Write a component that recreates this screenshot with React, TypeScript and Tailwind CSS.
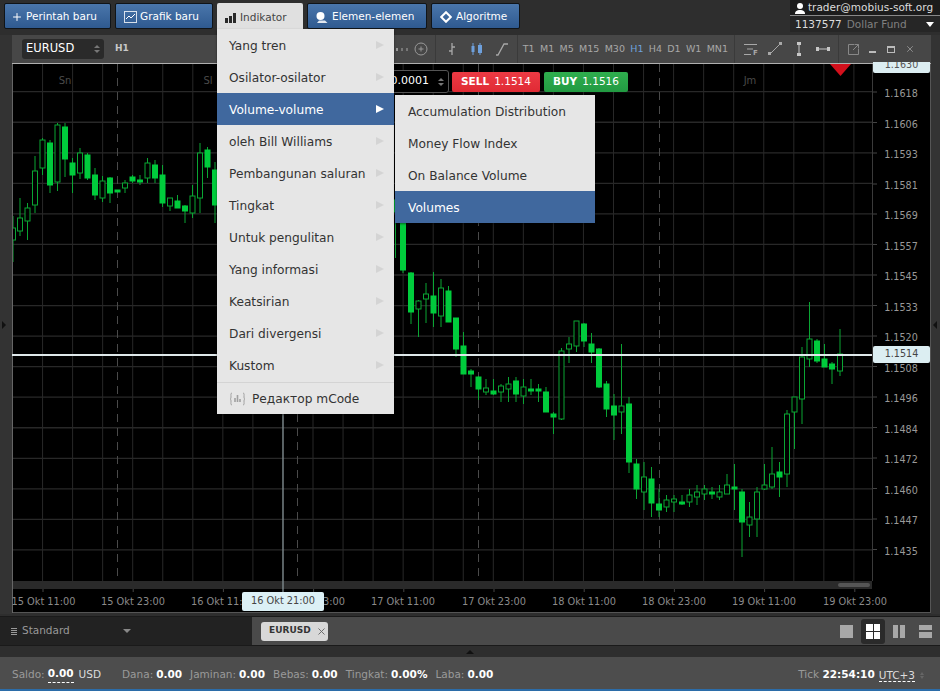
import React from 'react';
import { Plus, X } from 'lucide-react';

const FONT = "font-['DejaVu_Sans',sans-serif]";

// [x, wickTop, wickBottom, bodyTop, bodyBottom, filled]
type Candle = [number, number, number, number, number, number];

const candles: Candle[] = [
  [13, 216, 262, 228, 240, 0],
  [20, 198, 236, 218, 231, 0],
  [27.5, 203, 240, 208, 221, 0],
  [35, 156, 213, 171, 205, 0],
  [42.5, 138, 175, 140, 168, 0],
  [50, 140, 193, 143, 185, 1],
  [57.5, 123, 191, 125, 182, 0],
  [65, 123, 177, 127, 159, 1],
  [72.5, 158, 193, 163, 175, 1],
  [80, 148, 179, 153, 173, 0],
  [87.5, 153, 180, 155, 178, 1],
  [95, 168, 200, 175, 195, 1],
  [102.5, 176, 202, 181, 198, 0],
  [110, 177, 203, 178, 193, 1],
  [117.5, 190, 192, 190, 192, 1],
  [125, 180, 193, 183, 188, 0],
  [132.5, 175, 183, 177, 181, 1],
  [140, 175, 185, 180, 182, 1],
  [147.5, 158, 183, 163, 178, 0],
  [155, 160, 183, 165, 178, 1],
  [162.5, 165, 207, 175, 203, 1],
  [170, 198, 211, 198, 206, 0],
  [177.5, 195, 208, 201, 208, 1],
  [185, 205, 223, 206, 211, 1],
  [192.5, 185, 218, 196, 213, 0],
  [200, 143, 213, 153, 198, 0],
  [207.5, 147, 178, 150, 167, 1],
  [215, 162, 223, 170, 205, 1],
  [395.5, 200, 258, 200, 212, 1],
  [403, 220, 273, 220, 270, 1],
  [411, 272, 324, 273, 312, 1],
  [418.5, 300, 337, 301, 309, 0],
  [426, 283, 323, 294, 299, 0],
  [433.5, 272, 327, 296, 313, 1],
  [441, 279, 327, 288, 316, 0],
  [448.5, 286, 322, 291, 322, 1],
  [456, 318, 357, 318, 349, 1],
  [463.5, 332, 374, 346, 374, 1],
  [471, 369, 387, 371, 374, 1],
  [478.5, 376, 400, 377, 389, 1],
  [486, 379, 395, 388, 392, 0],
  [493.5, 379, 395, 391, 394, 1],
  [501, 384, 402, 386, 392, 0],
  [508.5, 377, 402, 384, 389, 0],
  [516, 377, 402, 381, 394, 1],
  [523.5, 379, 404, 387, 396, 0],
  [531, 379, 395, 389, 391, 1],
  [538.5, 384, 402, 389, 391, 1],
  [546, 387, 412, 392, 412, 1],
  [553.5, 412, 434, 414, 417, 1],
  [561.5, 348, 420, 351, 419, 0],
  [569, 337, 363, 344, 349, 0],
  [576.5, 321, 352, 321, 346, 0],
  [584, 323, 347, 324, 341, 1],
  [591.5, 333, 363, 344, 352, 1],
  [599, 348, 388, 349, 387, 1],
  [606.5, 381, 417, 384, 409, 1],
  [614, 394, 440, 406, 415, 1],
  [621.5, 344, 434, 406, 412, 0],
  [629, 397, 473, 404, 462, 1],
  [636.5, 459, 499, 464, 489, 1],
  [644, 462, 510, 477, 492, 0],
  [651.5, 467, 517, 479, 503, 1],
  [659, 489, 517, 504, 510, 1],
  [666.5, 495, 512, 500, 507, 0],
  [674, 495, 512, 499, 502, 0],
  [682, 495, 505, 502, 504, 1],
  [689.5, 489, 507, 495, 502, 0],
  [697, 485, 505, 492, 497, 0],
  [704.5, 485, 500, 489, 494, 0],
  [712, 487, 499, 492, 494, 1],
  [719.5, 485, 500, 492, 497, 0],
  [727, 474, 494, 485, 494, 0],
  [734.5, 464, 510, 487, 489, 1],
  [742, 489, 557, 492, 522, 1],
  [749.5, 502, 537, 517, 525, 0],
  [757, 487, 537, 492, 519, 0],
  [764.5, 464, 490, 485, 489, 0],
  [772, 447, 489, 474, 487, 0],
  [779.5, 462, 497, 472, 477, 1],
  [787, 410, 487, 414, 474, 0],
  [794.5, 397, 449, 397, 412, 0],
  [802, 347, 424, 357, 399, 0],
  [809.5, 302, 367, 339, 359, 0],
  [817, 339, 363, 341, 361, 1],
  [824.5, 344, 367, 359, 367, 1],
  [832, 362, 384, 364, 369, 1],
  [840, 329, 376, 354, 371, 0],
];

const prices: [string, number][] = [
  ['1.1618', 93], ['1.1606', 123.5], ['1.1593', 154], ['1.1581', 185],
  ['1.1569', 215], ['1.1557', 245.5], ['1.1545', 276], ['1.1533', 306.5],
  ['1.1520', 337], ['1.1508', 367.5], ['1.1496', 398], ['1.1484', 428.5],
  ['1.1472', 459], ['1.1460', 489.5], ['1.1447', 520], ['1.1435', 550.5],
];

const times: [string, number][] = [
  ['15 Okt 11:00', 43.5], ['15 Okt 23:00', 133], ['16 Okt 11:00', 223], ['16 Okt 23:00', 313],
  ['17 Okt 11:00', 403], ['17 Okt 23:00', 494], ['18 Okt 11:00', 584], ['18 Okt 23:00', 674],
  ['19 Okt 11:00', 764], ['19 Okt 23:00', 855],
];

const menuItems = [
  'Yang tren', 'Osilator-osilator', 'Volume-volume', 'oleh Bill Williams', 'Pembangunan saluran',
  'Tingkat', 'Untuk pengulitan', 'Yang informasi', 'Keatsirian', 'Dari divergensi', 'Kustom',
];

const subItems = ['Accumulation Distribution', 'Money Flow Index', 'On Balance Volume', 'Volumes'];

const periods = ['T1', 'M1', 'M5', 'M15', 'M30', 'H1', 'H4', 'D1', 'W1', 'MN1'];

const ChartCanvas = () => (
  <svg viewBox="12 64 919 549" width={919} height={549} className="block bg-black">
    {Array.from({ length: 29 }, (_, k) => (
      <line key={k} x1={12.5 + k * 30.05} x2={12.5 + k * 30.05} y1={64} y2={581} stroke="#282828" />
    ))}
    {Array.from({ length: 16 }, (_, k) => (
      <line key={k} x1={12} x2={872} y1={91.7 + k * 30.55} y2={91.7 + k * 30.55} stroke="#282828" strokeWidth={1.3} />
    ))}
    {[117.5, 297.5, 478.5, 659.5].map((x) => (
      <line key={x} x1={x} x2={x} y1={64} y2={581} stroke="#4a4a4a" strokeDasharray="8 6" />
    ))}
    {candles.map(([x, wt, wb, bt, bb, filled], i) => (
      <g key={i}>
        <line x1={x} x2={x} y1={wt} y2={wb} stroke="#0aa533" />
        <rect
          x={x - 2.5}
          y={bt}
          width={5}
          height={Math.max(bb - bt, 2)}
          fill={filled ? '#00cc3c' : '#000'}
          stroke={filled ? '#00cc3c' : '#0aa533'}
        />
      </g>
    ))}
    <text x={65} y={84} fontSize={10} fill="#4a4a4a" textAnchor="middle">Sn</text>
    <text x={208} y={84} fontSize={10} fill="#4a4a4a" textAnchor="middle">Sl</text>
    <text x={750} y={84} fontSize={10} fill="#4a4a4a" textAnchor="middle">Jm</text>

    <rect x={12} y={581} width={860} height={8} fill="#2a2a2a" />
    <rect x={838} y={583} width={32} height={4} rx={2} fill="#555" />
    <rect x={12} y={612} width={919} height={1} fill="#555" />
    <rect x={12} y={64} width={1} height={549} fill="#666" />
    <rect x={872} y={64} width={1} height={517} fill="#3a3a3a" />
    <rect x={930} y={64} width={1} height={549} fill="#555" />

    {Array.from({ length: 10 }, (_, k) => (
      <line key={k} x1={43 + k * 90.2} x2={43 + k * 90.2} y1={589} y2={592} stroke="#444" />
    ))}
    {prices.map(([p, y]) => (
      <g key={p}>
        <line x1={873} x2={877} y1={y - 1} y2={y - 1} stroke="#444" />
        <text x={901} y={y + 4} fontSize={9.6} fill="#999" textAnchor="middle" className={FONT}>{p}</text>
      </g>
    ))}
    {times.map(([t, x]) => (
      <text key={t} x={x} y={604.5} fontSize={9.8} fill="#8a8a8a" textAnchor="middle" className={FONT}>{t}</text>
    ))}

    <line x1={283} x2={283} y1={64} y2={594} stroke="#9fb0b5" />
    <rect x={12} y={354} width={860} height={2} fill="#dfe8ea" />
    <polygon points="830,64 851,64 840.5,76" fill="#d3101c" />
  </svg>
);

const TopButton = ({ icon, label, className }: { icon: React.ReactNode; label: string; className: string }) => (
  <button className={`flex items-center h-[26px] pl-[8px] pt-[2px] rounded-[2px] border border-[#101418] bg-gradient-to-b from-[#4a76ab] to-[#2f5a90] text-white text-[10.5px] ${className}`}>
    {icon}
    <span>{label}</span>
  </button>
);

const IconGrafik = () => (
  <svg width="13" height="12" viewBox="0 0 13 12" fill="none" stroke="#fff">
    <rect x="0.5" y="0.5" width="12" height="11" strokeOpacity="0.8" />
    <path d="M2 8l3-3 2 2 4-4" />
  </svg>
);

const IconBars = () => (
  <svg width="11" height="10" viewBox="0 0 11 10" fill="#2a2a2a">
    <rect x="0" y="5" width="3" height="5" />
    <rect x="4" y="3" width="3" height="7" />
    <rect x="8" y="0" width="3" height="10" />
  </svg>
);

const IconElemen = () => (
  <svg width="12" height="11" viewBox="0 0 12 11" fill="#fff">
    <circle cx="4.5" cy="4" r="4" />
    <path d="M3 8.5h6l2.5 2.5H1z" fillOpacity="0.85" />
  </svg>
);

const IconDiamond = () => (
  <svg width="12" height="12" viewBox="0 0 12 12" fill="none" stroke="#fff" strokeWidth="2">
    <path d="M6 1.2L10.8 6 6 10.8 1.2 6z" />
  </svg>
);

const ToolIcon = ({ children, className }: { children: React.ReactNode; className?: string }) => (
  <svg width="14" height="16" viewBox="0 0 14 16" fill="none" stroke="#a8a8a8" className={className}>
    {children}
  </svg>
);

const Toolbar = () => (
  <div className="h-[29px] flex items-center bg-[#474747] border-b border-[#b0b0b0] text-[#a8a8a8] text-[9.5px]">
    <div className="ml-[10px] w-[82px] h-[20px] rounded-[3px] bg-[#2a2a2a] text-white text-[11.5px] flex items-center justify-between pl-[4px] pr-[4px]">
      <span>EURUSD</span>
      <span className="flex flex-col gap-[2px]">
        <span className="block w-0 h-0 border-x-[3px] border-x-transparent border-b-[3px] border-b-[#777]" />
        <span className="block w-0 h-0 border-x-[3px] border-x-transparent border-t-[3px] border-t-[#777]" />
      </span>
    </div>
    <span className="ml-[11px] font-bold text-[9px] text-[#c8c8c8]">H1</span>
    <div className="ml-[267px] flex items-center gap-[3px]">
      <span className="w-[2px] h-[3px] bg-[#999]" />
      <span className="w-[2px] h-[3px] bg-[#777]" />
      <span className="w-[2px] h-[3px] bg-[#777]" />
    </div>
    <svg className="ml-[6px]" width="14" height="14" viewBox="0 0 14 14" fill="none" stroke="#999">
      <circle cx="7" cy="7" r="6" />
      <path d="M7 4.5v5M4.5 7h5" />
    </svg>
    <div className="ml-[7px] h-full w-px bg-[#3a3a3a]" />
    <div className="ml-[9px] flex items-center gap-[11px]">
      <ToolIcon><path d="M7 2v12M4 10h3M7 6h3" strokeWidth="1.3" /></ToolIcon>
      <svg width="14" height="16" viewBox="0 0 14 16">
        <path d="M3 2v12" stroke="#6ea0dc" />
        <rect x="1.5" y="5" width="3" height="6" fill="#6ea0dc" />
        <path d="M10 2v12" stroke="#6ea0dc" />
        <rect x="8" y="4" width="4" height="8" fill="#6ea0dc" />
      </svg>
      <ToolIcon><path d="M1 14h2L9 3h4" strokeWidth="1.3" /></ToolIcon>
    </div>
    <div className="ml-[8px] h-full w-px bg-[#3a3a3a]" />
    <div className="ml-[5px] flex items-center gap-[5.3px]">
      {periods.map((p) => (
        <span key={p} className={p === 'H1' ? 'text-[#6ea0dc]' : ''}>{p}</span>
      ))}
    </div>
    <div className="ml-[6px] h-full w-px bg-[#3a3a3a]" />
    <svg className="ml-[9px]" width="14" height="14" viewBox="0 0 14 14" fill="none" stroke="#a8a8a8">
      <path d="M0 2.5h13M3 7h6M0 12.5h7" />
      <text x="9" y="13" fontSize="7" fontWeight="bold" fill="#a8a8a8" stroke="none">F</text>
    </svg>
    <ToolIcon className="ml-[10px]"><path d="M2 13L12 3" /><rect x="0.5" y="11.5" width="2" height="2" fill="#a8a8a8" /><rect x="11.5" y="1.5" width="2" height="2" fill="#a8a8a8" /></ToolIcon>
    <ToolIcon className="ml-[10px]"><path d="M7 2v12" stroke="#c8c8c8" /><rect x="5.5" y="1.5" width="3" height="2" fill="#c8c8c8" stroke="#c8c8c8" /><rect x="5.5" y="12.5" width="3" height="2" fill="#c8c8c8" stroke="#c8c8c8" /></ToolIcon>
    <ToolIcon className="ml-[10px]"><path d="M1 8h12" stroke="#c8c8c8" /><rect x="0.5" y="6.5" width="2" height="3" fill="#c8c8c8" stroke="#c8c8c8" /><rect x="11.5" y="6.5" width="2" height="3" fill="#c8c8c8" stroke="#c8c8c8" /></ToolIcon>
    <div className="ml-[8px] h-full w-px bg-[#3a3a3a]" />
    <svg className="ml-[9px]" width="11" height="11" viewBox="0 0 11 11" fill="none" stroke="#888">
      <path d="M6 .5H.5v10h10V5M6.5.5h4v4M10.5.5L5 6" />
    </svg>
    <span className="ml-[10px] w-[7px] h-[2px] mt-[6px] bg-[#bbb]" />
    <span className="ml-[11px] w-[8px] h-[7px] border border-[#bbb] border-t-2" />
    <X size={10} className="ml-[10px] text-[#999]" />
  </div>
);

const Menu = () => (
  <div className="absolute left-[217px] top-[29px] w-[177px] bg-[#e6e6e6] text-[#333] text-[12.2px] shadow-[0_1px_2px_rgba(0,0,0,0.5)]">
    {menuItems.map((item) => (
      <div
        key={item}
        className={`h-[32px] pl-[12px] pr-[10px] pt-[3px] flex items-center justify-between ${item === 'Volume-volume' ? 'bg-[#40689e] text-white' : ''}`}
      >
        <span>{item}</span>
        <span
          className={`block w-0 h-0 mb-[3px] border-y-[4px] border-y-transparent border-l-[8px] ${item === 'Volume-volume' ? 'border-l-white' : 'border-l-[#d4d4d4]'}`}
        />
      </div>
    ))}
    <div className="h-[32px] mt-px border-t border-[#d4d4d4] pl-[12px] pt-[1px] flex items-center gap-[6px]">
      <svg width="17" height="14" viewBox="0 0 17 14" fill="none" stroke="#a0a0a0">
        <path d="M3 1C1.5 1 2 3 2 5S1 7 1 7s1 0 1 2-.5 4 1 4M14 1c1.5 0 1 2 1 4s1 2 1 2-1 0-1 2 .5 4-1 4" />
        <path d="M6 6v4M8.5 3v7M11 7v3" strokeWidth="1.6" />
      </svg>
      <span>Редактор mCode</span>
    </div>
    <div className="absolute left-[178px] top-[66px] w-[200px] bg-[#e6e6e6] shadow-[0_1px_2px_rgba(0,0,0,0.5)]">
      {subItems.map((item) => (
        <div
          key={item}
          className={`h-[32px] pl-[13px] pt-[3px] flex items-center ${item === 'Volumes' ? 'bg-[#40689e] text-white' : ''}`}
        >
          {item}
        </div>
      ))}
    </div>
  </div>
);

const StatusItem = ({ label, value }: { label: string; value: string }) => (
  <span className="flex gap-[3px] text-[#9a9a9a]">
    <span>{label}:</span>
    <b className="text-white">{value}</b>
  </span>
);

export default function App() {
  return (
    <div className={`relative w-[940px] h-[691px] overflow-hidden flex flex-col bg-[#2e2e2e] ${FONT}`}>
      {/* top bar */}
      <div className="h-[32px] flex items-start">
        <div className="flex gap-[4px] pt-[3px] pl-[4px]">
          <TopButton className="w-[107px] gap-[3px] !pl-[6px]" icon={<Plus size={12} strokeWidth={2} />} label="Perintah baru" />
          <TopButton className="w-[98px] gap-[3px]" icon={<IconGrafik />} label="Grafik baru" />
          <div className="w-[86px] h-[27px] pt-[2px] rounded-t-[2px] bg-[#e0e0e0] text-[#444] text-[10.5px] flex items-center gap-[4px] pl-[8px]">
            <IconBars />
            <span>Indikator</span>
          </div>
          <TopButton className="w-[120px] gap-[4px]" icon={<IconElemen />} label="Elemen-elemen" />
          <TopButton className="w-[89px] gap-[4px]" icon={<IconDiamond />} label="Algoritme" />
        </div>
        <div className="ml-auto w-[150px] h-[32px] text-[10.5px]">
          <div className="h-[16px] pt-[1px] bg-[#1c1c1c] border-b border-[#888] flex items-center gap-[3px] pl-[5px] text-[#ddd]">
            <svg width="10" height="11" viewBox="0 0 10 11" fill="#fff">
              <circle cx="5" cy="3" r="3" />
              <path d="M0 11c0-3 2-4 5-4s5 1 5 4z" />
            </svg>
            <span>trader@mobius-soft.org</span>
          </div>
          <div className="h-[16px] pt-[1px] bg-[#262626] flex items-center pl-[5px] pr-[6px]">
            <span className="text-[#ddd]">1137577</span>
            <span className="ml-[5px] text-[#808080]">Dollar Fund</span>
            <span className="ml-auto block w-0 h-0 border-x-[4px] border-x-transparent border-t-[5px] border-t-white" />
          </div>
        </div>
      </div>

      {/* workspace */}
      <div className="flex-1 flex pt-[3px]">
        <div className="w-[12px] bg-[#333] flex items-center">
          <span className="block w-0 h-0 border-y-[4px] border-y-transparent border-l-[4px] border-l-[#111] ml-[2px]" />
        </div>
        <div className="w-[919px] flex flex-col">
          <Toolbar />
          <div className="relative">
            <ChartCanvas />
            <div className="absolute left-[370px] top-[6px] w-[67px] h-[23px] rounded-[3px] border border-[#555] bg-black text-white text-[11px] flex items-center justify-end pr-[4px] gap-[9px]">
              <span>0.0001</span>
              <span className="flex flex-col gap-[2px]">
                <span className="block w-0 h-0 border-x-[3px] border-x-transparent border-b-[3px] border-b-[#777]" />
                <span className="block w-0 h-0 border-x-[3px] border-x-transparent border-t-[3px] border-t-[#777]" />
              </span>
            </div>
            <div className="absolute left-[440px] top-[8px] w-[88px] h-[20px] rounded-[2px] bg-gradient-to-b from-[#ec3a44] to-[#e02a34] text-white text-[10.5px] flex items-center justify-center gap-[5px]">
              <b>SELL</b> 1.1514
            </div>
            <div className="absolute left-[532px] top-[8px] w-[84px] h-[20px] rounded-[2px] bg-gradient-to-b from-[#2fae4e] to-[#229a42] text-white text-[10.5px] flex items-center justify-center gap-[5px]">
              <b>BUY</b> 1.1516
            </div>
            <div className="absolute left-[861px] top-[-2px] w-[57px] h-[11px] overflow-hidden rounded-b-[2px] bg-[#dceef2] text-[#555] text-[9.6px] text-center leading-[6px]">
              1.1630
            </div>
            <div className="absolute left-[861px] top-[282px] w-[57px] h-[17px] rounded-[2px] bg-[#dceef2] text-[#444] text-[9.6px] flex items-center justify-center">
              1.1514
            </div>
            <div className="absolute left-[230px] top-[528px] w-[82px] h-[19px] rounded-[2px] bg-[#dcf0f5] text-[#444] text-[9.8px] flex items-center justify-center">
              16 Okt 21:00
            </div>
          </div>
        </div>
        <div className="w-[9px] bg-[#333] flex items-center">
          <span className="block w-0 h-0 border-y-[4px] border-y-transparent border-r-[4px] border-r-[#111] ml-[2px]" />
        </div>
      </div>

      {/* tabs row */}
      <div className="h-[30px] mt-[2px] flex border-y border-[#1a1a1a]">
        <div className="w-[252px] bg-[#222] flex items-center pl-[11px] text-[10.5px] text-[#999]">
          <span className="flex flex-col gap-[1px] mr-[5px]">
            <span className="block w-[6px] h-px bg-[#999]" />
            <span className="block w-[6px] h-px bg-[#999]" />
            <span className="block w-[6px] h-px bg-[#999]" />
            <span className="block w-[6px] h-px bg-[#999]" />
          </span>
          <span>Standard</span>
          <span className="ml-[53px] block w-0 h-0 border-x-[4px] border-x-transparent border-t-[4px] border-t-[#888]" />
        </div>
        <div className="flex-1 bg-[#4a4a4a] flex items-center pl-[9px] pr-[8px]">
          <div className="w-[67px] h-[19px] rounded-[3px] bg-[#d8d8d8] text-[#333] text-[9px] font-bold flex items-center gap-[5px] pl-[8px]">
            <span>EURUSD</span>
            <X size={11} className="text-[#666]" />
          </div>
          <div className="ml-auto flex items-center">
            <span className="w-[13px] h-[13px] bg-[#a8a8a8]" />
            <span className="ml-[8px] w-[24px] h-[25px] rounded-[3px] bg-[#2a2a2a] grid grid-cols-2 gap-px p-[5px]">
              <span className="bg-white" /><span className="bg-white" /><span className="bg-white" /><span className="bg-white" />
            </span>
            <span className="ml-[8px] w-[12px] h-[13px] grid grid-cols-2 gap-[2px]">
              <span className="bg-[#a8a8a8]" /><span className="bg-[#a8a8a8]" />
            </span>
            <span className="ml-[14px] w-[13px] h-[13px] grid grid-rows-2 gap-[2px]">
              <span className="bg-[#a8a8a8]" /><span className="bg-[#a8a8a8]" />
            </span>
          </div>
        </div>
      </div>

      {/* collapse band */}
      <div className="h-[11px] bg-[#2e2e2e] flex justify-center items-center">
        <span className="block w-0 h-0 border-x-[4px] border-x-transparent border-b-[4px] border-b-[#111]" />
      </div>

      {/* status bar */}
      <div className="h-[34px] pt-[4px] bg-[#4d4d4d] border-b-2 border-[#2b6ca8] flex items-center pl-[12px] pr-[16px] text-[10.5px]">
        <span className="flex gap-[3px] text-[#9a9a9a]">
          <span>Saldo:</span>
          <b className="text-white border-b border-dashed border-white leading-[12px]">0.00</b>
          <span className="ml-[2px] text-[#ddd]">USD</span>
        </span>
        <div className="ml-[21px] flex gap-[8px]">
          <StatusItem label="Dana" value="0.00" />
          <StatusItem label="Jaminan" value="0.00" />
          <StatusItem label="Bebas" value="0.00" />
          <StatusItem label="Tingkat" value="0.00%" />
          <StatusItem label="Laba" value="0.00" />
        </div>
        <div className="ml-auto flex items-center gap-[4px]">
          <span className="text-[#9a9a9a]">Tick <b className="text-white">22:54:10</b></span>
          <span className="text-[#ddd] border-b border-dashed border-white leading-[12px]">UTC+3</span>
          <span className="flex flex-col gap-[1px] ml-[1px]">
            <span className="block w-0 h-0 border-x-[2px] border-x-transparent border-b-[3px] border-b-[#666]" />
            <span className="block w-0 h-0 border-x-[2px] border-x-transparent border-t-[3px] border-t-[#666]" />
          </span>
        </div>
      </div>

      <Menu />
    </div>
  );
}
